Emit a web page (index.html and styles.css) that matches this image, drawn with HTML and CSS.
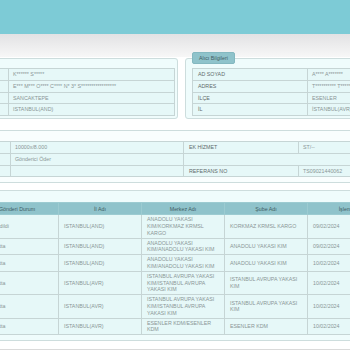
FILE: index.html
```html
<!DOCTYPE html>
<html lang="tr">
<head>
  <meta charset="UTF-8">
  <meta name="viewport" content="width=device-width, initial-scale=1.0">
  <title>Gönderi Sorgulama</title>
  <link rel="stylesheet" href="styles.css">
</head>
<body>

  <div class="topbar"></div>
  <div class="subbar"></div>

  <div class="page">

    <div class="info">
      <fieldset class="box">
        <legend>Gönderici Bilgileri</legend>
        <table class="grid">
          <colgroup><col class="c-left"><col></colgroup>
          <tr><td class="lbl">AD SOYAD</td><td>K****** S*****</td></tr>
          <tr><td class="lbl">ADRES</td><td>E*** M*** O**** C**** N* 3* S*****************</td></tr>
          <tr><td class="lbl">İLÇE</td><td>SANCAKTEPE</td></tr>
          <tr><td class="lbl">İL</td><td>ISTANBUL(AND)</td></tr>
        </table>
      </fieldset>

      <fieldset class="box">
        <legend>Alıcı Bilgileri</legend>
        <table class="grid">
          <colgroup><col class="c-right"><col></colgroup>
          <tr><td class="lbl">AD SOYAD</td><td>A**** A*******</td></tr>
          <tr><td class="lbl">ADRES</td><td>T********** T****** M*** N* 1* D* 2*</td></tr>
          <tr><td class="lbl">İLÇE</td><td>ESENLER</td></tr>
          <tr><td class="lbl">İL</td><td>İSTANBUL(AVR)</td></tr>
        </table>
      </fieldset>
    </div>

    <fieldset class="box wide">
      <legend>Gönderi Bilgileri</legend>
      <table class="grid">
        <colgroup><col class="c-w1"><col class="c-w2"><col class="c-w3"><col></colgroup>
        <tr><td class="lbl">DESİ / KG</td><td>10000x/8.000</td><td class="lbl">EK HİZMET</td><td>ST/--</td></tr>
        <tr><td class="lbl">ÖDEME TİPİ</td><td>Gönderici Öder</td><td colspan="2"></td></tr>
        <tr><td class="lbl">TESLİM ALAN</td><td></td><td class="lbl">REFERANS NO</td><td>TS09021440062</td></tr>
      </table>
    </fieldset>

    <fieldset class="box moves-box">
      <legend>Gönderi Hareketleri</legend>
      <table class="moves">
        <colgroup>
          <col class="m-no"><col class="m-col"><col class="m-col"><col class="m-col"><col class="m-col"><col class="m-date"><col>
        </colgroup>
        <tr>
          <th>Sıra</th><th>Gönderi Durum</th><th>İl Adı</th><th>Merkez Adı</th><th>Şube Adı</th><th>İşlem Tarihi</th><th>Saat</th>
        </tr>
        <tr>
          <td>1</td><td>Kabul Edildi</td><td>ISTANBUL(AND)</td><td>ANADOLU YAKASI KIM/KORKMAZ KRMSL KARGO</td><td>KORKMAZ KRMSL KARGO</td><td>09/02/2024</td><td>14:20</td>
        </tr>
        <tr>
          <td>2</td><td>Sevkiyatta</td><td>ISTANBUL(AND)</td><td>ANADOLU YAKASI KIM/ANADOLU YAKASI KIM</td><td>ANADOLU YAKASI KIM</td><td>09/02/2024</td><td>21:05</td>
        </tr>
        <tr>
          <td>3</td><td>Sevkiyatta</td><td>ISTANBUL(AND)</td><td>ANADOLU YAKASI KIM/ANADOLU YAKASI KIM</td><td>ANADOLU YAKASI KIM</td><td>10/02/2024</td><td>01:12</td>
        </tr>
        <tr>
          <td>4</td><td>Sevkiyatta</td><td>ISTANBUL(AVR)</td><td>ISTANBUL AVRUPA YAKASI KIM/ISTANBUL AVRUPA YAKASI KIM</td><td>ISTANBUL AVRUPA YAKASI KIM</td><td>10/02/2024</td><td>03:40</td>
        </tr>
        <tr>
          <td>5</td><td>Sevkiyatta</td><td>ISTANBUL(AVR)</td><td>ISTANBUL AVRUPA YAKASI KIM/ISTANBUL AVRUPA YAKASI KIM</td><td>ISTANBUL AVRUPA YAKASI KIM</td><td>10/02/2024</td><td>05:18</td>
        </tr>
        <tr>
          <td>6</td><td>Sevkiyatta</td><td>ISTANBUL(AVR)</td><td>ESENLER KDM/ESENLER KDM</td><td>ESENLER KDM</td><td>10/02/2024</td><td>07:55</td>
        </tr>
      </table>
    </fieldset>

  </div>

  <div class="footer"></div>

</body>
</html>
```

FILE: styles.css
```css
html,
body {
  margin: 0;
  overflow: hidden;
}

body {
  background: #fff;
  font-family: "Liberation Sans", Arial, sans-serif;
  font-size: 5.3px;
  color: #8a9696;
}

.topbar {
  height: 34px;
  background: #7dcbd6;
}

.subbar {
  height: 23px;
  background: linear-gradient(#e2e2e4, #f7f7f7);
}

/* page is wider than the window, scrolled a bit to the right */
.page {
  width: 563px;
  margin-left: -100px;
}

.info {
  display: flex;
  gap: 7px;
  margin-top: -5px;
}

.info .box {
  flex: 0 0 278px;
}

.box {
  margin: 0;
  min-width: 0;
  box-sizing: border-box;
  border: 1px solid #cddddd;
  border-radius: 3px;
  padding: 4px 2px 2px 6px;
  background: #effcfc;
}

.box legend {
  padding: 2px 6px;
  line-height: 6px;
  background: #8fc3cb;
  border: 1px solid #84b8c0;
  border-radius: 2px;
  color: #3f5d63;
}

.wide {
  margin-top: 5px;
  padding-top: 5px;
  padding-bottom: 5px;
  background: #f9fefe;
}

.moves-box {
  margin-top: 1px;
  padding-top: 6px;
  padding-bottom: 5px;
}

.grid {
  width: 100%;
  border-collapse: collapse;
  table-layout: fixed;
  background: #e6f8f8;
}

.grid td {
  border: 1px solid #c6d5d5;
  padding: 1px 5px 1px 4px;
  line-height: 8.75px;
  white-space: nowrap;
  overflow: hidden;
}

.grid .lbl {
  padding-left: 5px;
  color: #5f6a6a;
}

.c-left { width: 101px; }
.c-right { width: 115px; }
.c-w1 { width: 103px; }
.c-w2 { width: 173px; }
.c-w3 { width: 115px; }

.moves {
  width: 100%;
  border-collapse: collapse;
  table-layout: fixed;
  background: #e6f8f8;
}

.moves th {
  background: #8fc3cb;
  color: #3f5d63;
  font-weight: normal;
  line-height: 6px;
  padding: 2.5px 5px;
  border: 1px solid #9ccbd1;
  white-space: nowrap;
  overflow: hidden;
}

.moves td {
  border: 1px solid #c6d5d5;
  padding: 1px 5px;
  line-height: 6.8px;
  vertical-align: middle;
}

.m-no { width: 68px; }
.m-col { width: 83px; }
.m-date { width: 89px; }

.footer {
  margin-top: 8px;
  height: 40px;
  background: #dadada;
}
```
